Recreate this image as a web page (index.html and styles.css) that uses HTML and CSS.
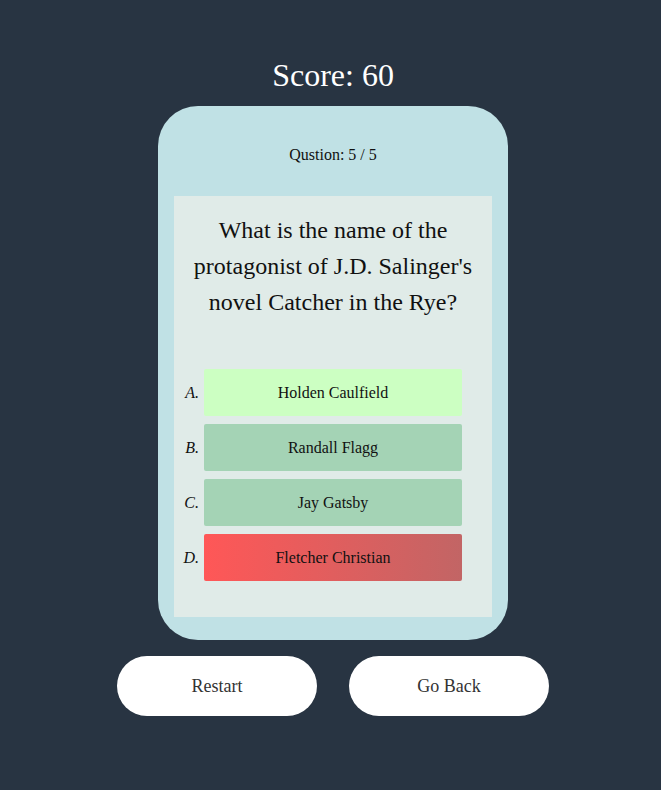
FILE: index.html
```html
<!DOCTYPE html>
<html>
<head>
<meta charset="utf-8">
<link rel="stylesheet" href="styles.css">
</head>
<body>
<main class="app">
  <h1 class="score">Score: 60</h1>
  <section class="card">
    <p class="counter">Qustion: 5 / 5</p>
    <div class="panel">
      <p class="question">What is the name of the protagonist of J.D. Salinger's novel Catcher in the Rye?</p>
      <div class="options">
        <div class="option"><span class="letter">A.</span><button class="answer correct">Holden Caulfield</button></div>
        <div class="option"><span class="letter">B.</span><button class="answer">Randall Flagg</button></div>
        <div class="option"><span class="letter">C.</span><button class="answer">Jay Gatsby</button></div>
        <div class="option"><span class="letter">D.</span><button class="answer wrong">Fletcher Christian</button></div>
      </div>
    </div>
  </section>
  <div class="actions">
    <button class="pill">Restart</button>
    <button class="pill">Go Back</button>
  </div>
</main>
</body>
</html>
```
FILE: styles.css
```css
html, body {
  margin: 0;
  padding: 0;
  background: #283442;
  font-family: "Liberation Serif", "Times New Roman", serif;
}
.app {
  display: flex;
  flex-direction: column;
  align-items: center;
  padding-top: 57px;
  padding-left: 5px;
}
.score {
  margin: 0 0 12px;
  font-size: 32px;
  font-weight: normal;
  line-height: 37px;
  color: #ffffff;
}
.card {
  width: 350px;
  box-sizing: border-box;
  background: #c0e1e5;
  border-radius: 40px;
  padding: 40px 16px 23px;
}
.counter {
  margin: 0 0 32px;
  text-align: center;
  font-size: 16px;
  line-height: 18px;
  color: #111;
}
.panel {
  background: #e0ebe8;
  padding: 16px 0 36px;
}
.question {
  margin: 0 0 49px;
  padding: 0 14px;
  text-align: center;
  font-size: 24px;
  line-height: 36px;
  color: #111;
}
.options {
  display: flex;
  flex-direction: column;
  gap: 8px;
}
.option {
  display: grid;
  grid-template-columns: 1fr 258px 1fr;
  align-items: center;
}
.letter {
  justify-self: end;
  margin-right: 5px;
  font-style: italic;
  font-size: 16px;
  color: #111;
}
.answer {
  height: 47px;
  border: none;
  border-radius: 2px;
  background: #a4d3b5;
  font-family: "Liberation Serif", "Times New Roman", serif;
  font-size: 16px;
  color: #111;
  padding: 0;
}
.answer.correct {
  background: #ccffc2;
}
.answer.wrong {
  background: linear-gradient(90deg, #ff5757, #c26565);
}
.actions {
  display: flex;
  gap: 32px;
  margin-top: 16px;
}
.pill {
  width: 200px;
  height: 60px;
  border: none;
  border-radius: 30px;
  background: #ffffff;
  font-family: "Liberation Serif", "Times New Roman", serif;
  font-size: 18px;
  color: #333;
}
```
